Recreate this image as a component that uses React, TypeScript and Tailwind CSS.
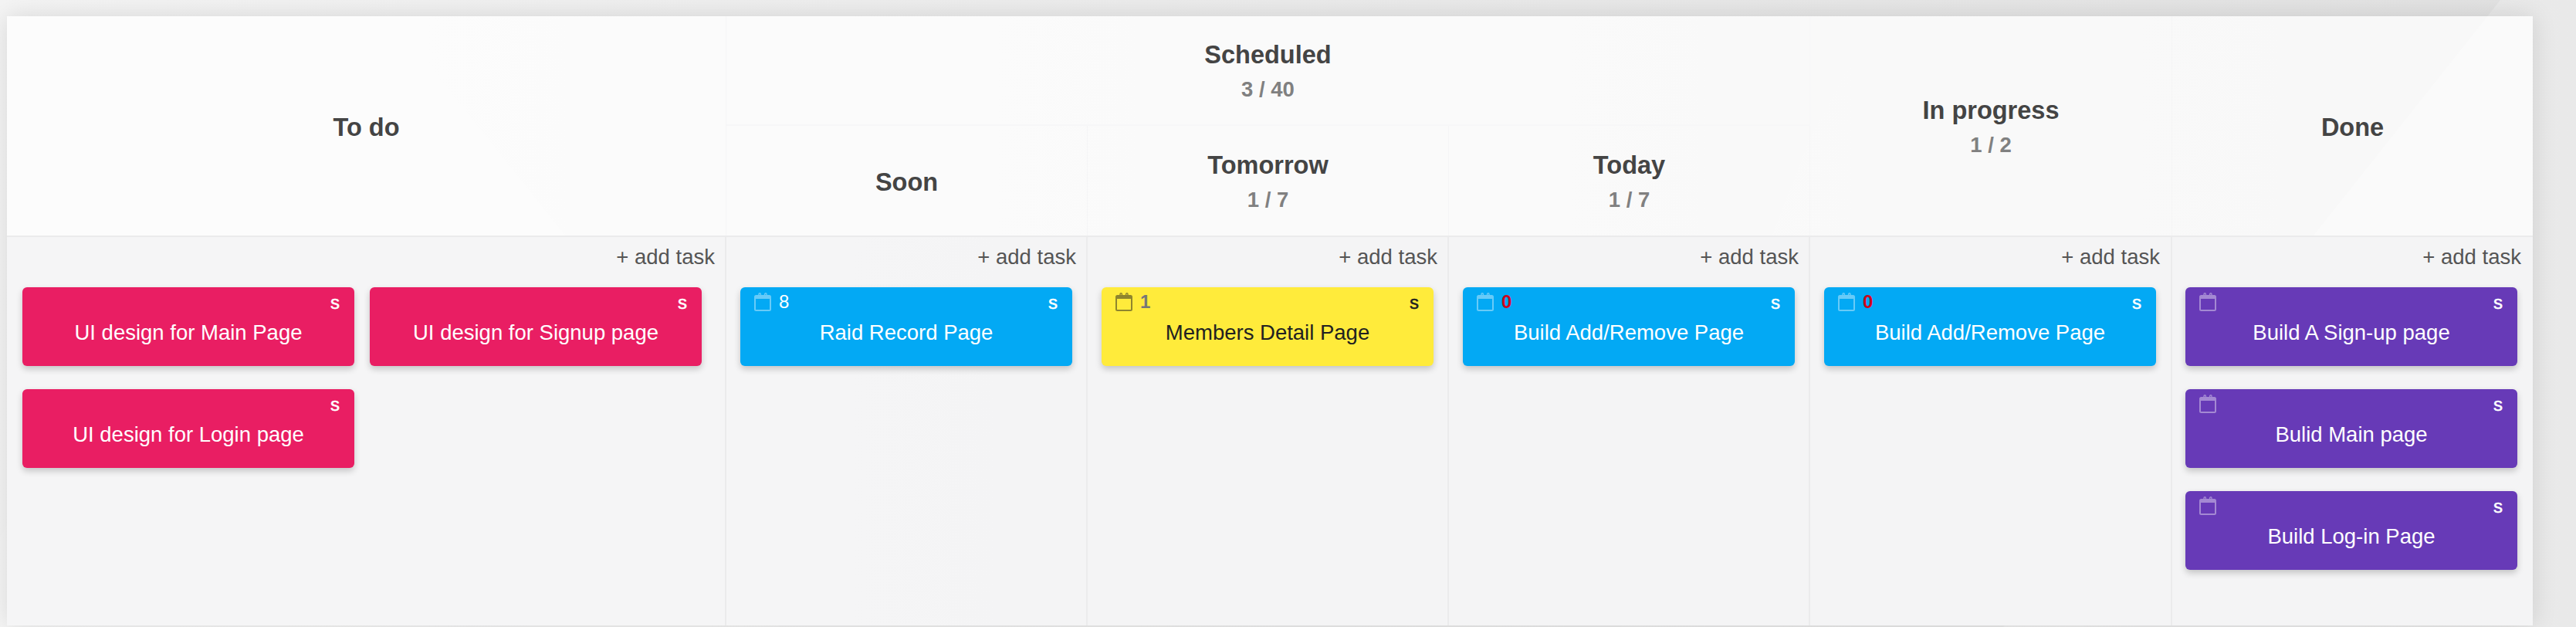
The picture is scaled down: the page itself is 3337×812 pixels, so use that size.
import React from "react";

type Task = {
  title: string;
  color: "pink" | "blue" | "yellow" | "purple";
  days?: string;
  late?: boolean;
  noDate?: boolean;
};

const cardColors = {
  pink: "bg-[#e91e63] text-white",
  blue: "bg-[#03a9f4] text-white",
  yellow: "bg-[#ffeb3b] text-[#212121]",
  purple: "bg-[#673ab7] text-white",
};

function CalendarIcon({ className }: { className: string }) {
  return (
    <svg viewBox="0 0 22 24" width="22" height="24" fill="none" className={className}>
      <rect x="1" y="4" width="20" height="19" rx="1.5" stroke="currentColor" strokeWidth="2" />
      <rect x="1" y="4" width="20" height="4" fill="currentColor" />
      <path d="M6 6V2a1.2 1.2 0 0 1 2.4 0v4M13.6 6V2A1.2 1.2 0 0 1 16 2v4" stroke="currentColor" strokeWidth="1.4" />
    </svg>
  );
}

function TaskCard({ task }: { task: Task }) {
  const yellow = task.color === "yellow";
  return (
    <div className={`flex h-[102px] w-[430px] flex-col rounded-[6px] shadow-[0_4px_8px_rgba(0,0,0,0.2)] ${cardColors[task.color]}`}>
      <div className="flex h-[42px] items-start pl-[18px] pr-[19px] pt-[7px]">
        {!task.noDate && <CalendarIcon className={yellow ? "text-[#212121] opacity-50" : "text-white opacity-40"} />}
        {task.days && (
          <span
            className={`ml-[10px] text-[24px] leading-[23px] ${
              task.late ? "font-bold text-[#d0021b]" : yellow ? "font-bold text-[#777777]" : "text-white"
            }`}
          >
            {task.days}
          </span>
        )}
        <span className="ml-auto pt-[1px] text-[24px] font-normal leading-[24px] [-webkit-text-stroke:0.5px]">s</span>
      </div>
      <div className="text-center text-[27.5px] leading-[34px]">{task.title}</div>
    </div>
  );
}

function HeaderCell({ title, count, className }: { title: string; count?: string; className: string }) {
  return (
    <div className={`flex flex-col items-center justify-center pt-[4px] text-center ${className}`}>
      <div className="text-[32.5px] font-bold leading-[46px] text-[#444444]">{title}</div>
      {count && <div className="text-[27.5px] font-bold leading-[44px] text-[#808080]">{count}</div>}
    </div>
  );
}

function Column({ tasks, className, wide }: { tasks: Task[]; className: string; wide?: boolean }) {
  return (
    <div className={`flex flex-col ${className}`}>
      <div className="pt-[12px] text-right text-[27.5px] leading-[28px] text-[#555555]">+ add task</div>
      <div className={wide ? "mt-[25px] grid grid-cols-[430px_430px] gap-x-5 gap-y-[30px]" : "mt-[25px] flex flex-col gap-[30px]"}>
        {tasks.map((t) => (
          <TaskCard key={t.title} task={t} />
        ))}
      </div>
    </div>
  );
}

const todo: Task[] = [
  { title: "UI design for Main Page", color: "pink", noDate: true },
  { title: "UI design for Signup page", color: "pink", noDate: true },
  { title: "UI design for Login page", color: "pink", noDate: true },
];

const done: Task[] = [
  { title: "Build A Sign-up page", color: "purple" },
  { title: "Bulid Main page", color: "purple" },
  { title: "Build Log-in Page", color: "purple" },
];

export default function App() {
  return (
    <div className="relative h-[812px] w-full overflow-hidden bg-linear-to-r from-[#f4f4f4] to-[#e2e2e2] font-['Liberation_Sans',Arial,sans-serif]">
      {/* faint background shapes */}
      <svg className="absolute inset-0" width="3337" height="812">
        <polygon points="3239,0 3337,0 3337,812 2595,812" fill="#ffffff" fillOpacity="0.25" />
        <polygon points="510,27 760,340 1010,812 -60,812 210,290" fill="#ffffff" fillOpacity="0.12" />
        <polygon points="2420,40 2344,180 2100,812 2700,812" fill="#ffffff" fillOpacity="0.08" />
      </svg>

      <div className="relative ml-[9px] mt-[21px] w-[3272px] shadow-[0_0_30px_rgba(0,0,0,0.12)]">
        <div className="grid grid-cols-[932px_468px_468px_468px_469px_467px] grid-rows-[142px_142px] border-b-2 border-[#ebebec] bg-white/75">
          <HeaderCell title="To do" className="row-span-2 border-r border-[#f5f5f6]" />
          <HeaderCell title="Scheduled" count="3 / 40" className="col-span-3 border-b-2 border-r border-[#f7f7f8]" />
          <HeaderCell title="In progress" count="1 / 2" className="row-span-2 border-r border-[#f5f5f6]" />
          <HeaderCell title="Done" className="row-span-2" />
          <HeaderCell title="Soon" className="border-r border-[#f5f5f6]" />
          <HeaderCell title="Tomorrow" count="1 / 7" className="border-r border-[#f5f5f6]" />
          <HeaderCell title="Today" count="1 / 7" className="border-r border-[#f5f5f6]" />
        </div>

        <div className="grid h-[503px] grid-cols-[932px_468px_468px_468px_469px_467px] bg-[#f4f4f5]/95">
          <Column wide tasks={todo} className="border-r-2 border-[#ebebec] pl-5 pr-[13px]" />
          <Column tasks={[{ title: "Raid Record Page", color: "blue", days: "8" }]} className="border-r-2 border-[#ebebec] pl-[18px] pr-[13px]" />
          <Column tasks={[{ title: "Members Detail Page", color: "yellow", days: "1" }]} className="border-r-2 border-[#ebebec] pl-[18px] pr-[13px]" />
          <Column tasks={[{ title: "Build Add/Remove Page", color: "blue", days: "0", late: true }]} className="border-r-2 border-[#ebebec] pl-[18px] pr-[13px]" />
          <Column tasks={[{ title: "Build Add/Remove Page", color: "blue", days: "0", late: true }]} className="border-r-2 border-[#ebebec] pl-[18px] pr-[14px]" />
          <Column tasks={done} className="pl-[17px] pr-[15px]" />
        </div>
      </div>
    </div>
  );
}
